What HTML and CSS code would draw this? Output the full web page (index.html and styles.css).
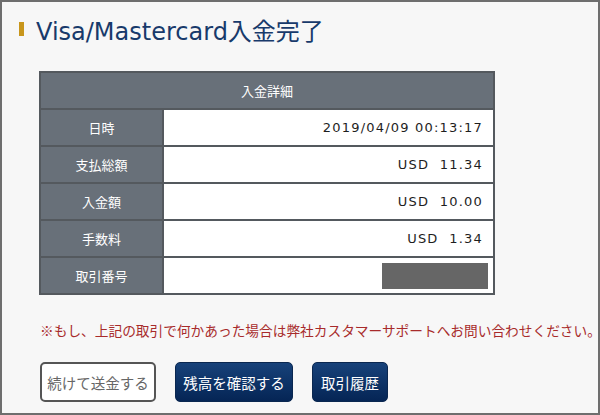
FILE: index.html
```html
<!DOCTYPE html>
<html lang="ja">
<head>
    <meta charset="UTF-8">
    <meta name="viewport" content="width=device-width, initial-scale=1.0">
    <title>Visa/Mastercard入金完了</title>
    <link rel="stylesheet" href="styles.css">
</head>
<body>
    <div class="frame">
        <h1 class="page-title">Visa/Mastercard入金完了</h1>
        <table class="detail">
            <tr>
                <th colspan="2" class="detail-head">入金詳細</th>
            </tr>
            <tr>
                <th>日時</th>
                <td>2019/04/09 00:13:17</td>
            </tr>
            <tr>
                <th>支払総額</th>
                <td>USD&nbsp;&nbsp;11.34</td>
            </tr>
            <tr>
                <th>入金額</th>
                <td>USD&nbsp;&nbsp;10.00</td>
            </tr>
            <tr>
                <th>手数料</th>
                <td>USD&nbsp;&nbsp;1.34</td>
            </tr>
            <tr>
                <th>取引番号</th>
                <td><span class="masked"></span></td>
            </tr>
        </table>
        <p class="notice">※もし、上記の取引で何かあった場合は弊社カスタマーサポートへお問い合わせください。</p>
        <div class="actions">
            <button class="btn btn-plain">続けて送金する</button>
            <button class="btn btn-navy btn-wide">残高を確認する</button>
            <button class="btn btn-navy">取引履歴</button>
        </div>
    </div>
</body>
</html>
```

FILE: styles.css
```css
html, body {
    margin: 0;
    padding: 0;
}
body {
    font-family: "Noto Sans CJK JP", "DejaVu Sans", sans-serif;
    background: #f7f7f7;
}
.frame {
    box-sizing: border-box;
    width: 600px;
    height: 415px;
    border: 2px solid #6e6e6e;
    padding: 0 0 0 17px;
    background: #f7f7f7;
    overflow: hidden;
}
.page-title {
    display: flex;
    align-items: center;
    margin: 8px 0 0;
    height: 38px;
    font-family: "DejaVu Sans", "Noto Sans CJK JP", sans-serif;
    font-weight: normal;
    font-size: 24px;
    color: #183a6b;
}
.page-title::before {
    content: "";
    width: 5px;
    height: 14px;
    background: #c8961c;
    margin-right: 12px;
}
.detail {
    margin: 23px 0 0 20px;
    width: 456px;
    border-collapse: collapse;
    font-size: 13px;
}
.detail th,
.detail td {
    height: 35px;
    padding: 0;
    border: 2px solid #54595e;
}
.detail th {
    width: 121px;
    background: #687079;
    color: #fff;
    font-weight: normal;
    text-align: center;
}
.detail .detail-head {
    width: auto;
}
.detail td {
    background: #fff;
    color: #1e1e1e;
    text-align: right;
    padding-right: 10px;
    font-family: "DejaVu Sans", sans-serif;
    letter-spacing: 1.2px;
}
.masked {
    display: inline-block;
    width: 106px;
    height: 26px;
    background: #666;
    vertical-align: middle;
    margin-right: -5px;
}
.notice {
    margin: 25px 0 0 21px;
    font-size: 13.7px;
    color: #a82b2b;
    white-space: nowrap;
}
.actions {
    display: flex;
    gap: 19px;
    margin: 22px 0 0 21px;
}
.btn {
    height: 40px;
    padding: 0;
    border-radius: 5px;
    font-family: "Noto Sans CJK JP", sans-serif;
    font-size: 14.5px;
    white-space: nowrap;
    cursor: pointer;
}
.btn-plain {
    width: 116px;
    background: #fff;
    border: 2px solid #555;
    color: #666;
}
.btn-navy {
    width: 76px;
    border: 1px solid #0a2750;
    background: linear-gradient(#17427a, #052555);
    color: #fff;
}
.btn-wide {
    width: 118px;
}
```
